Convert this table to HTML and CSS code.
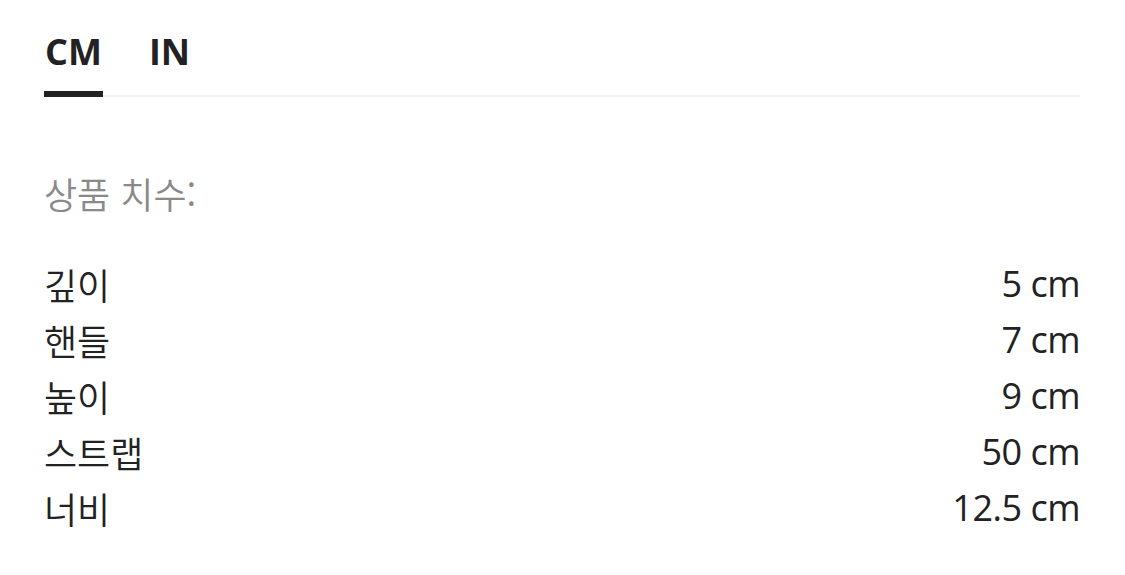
FILE: index.html
```html
<!DOCTYPE html>
<html lang="ko">
<head>
<meta charset="utf-8">
<link rel="stylesheet" href="styles.css">
</head>
<body>
<div class="sheet">
  <div class="tabs">
    <div class="tab active">CM</div>
    <div class="tab">IN</div>
  </div>
  <div class="label">상품 치수:</div>
  <ul class="dims">
    <li class="row"><span class="name">깊이</span><span class="val">5 cm</span></li>
    <li class="row"><span class="name">핸들</span><span class="val">7 cm</span></li>
    <li class="row"><span class="name">높이</span><span class="val">9 cm</span></li>
    <li class="row"><span class="name">스트랩</span><span class="val">50 cm</span></li>
    <li class="row"><span class="name">너비</span><span class="val">12.5 cm</span></li>
  </ul>
</div>
</body>
</html>
```

FILE: styles.css
```css
html, body {
  margin: 0;
  padding: 0;
  background: #ffffff;
}
body {
  font-family: "Open Sans", "Noto Sans CJK KR", sans-serif;
  color: #222222;
}
.sheet {
  padding: 26px 45px 0 44px;
}
.tabs {
  display: flex;
  gap: 45px;
  border-bottom: 2px solid #f1f1f1;
}
.tab {
  font-size: 36px;
  font-weight: 700;
  line-height: 52px;
  padding: 0 1px 13px 1px;
  border-bottom: 6px solid transparent;
  margin-bottom: -2px;
  color: #222222;
}
.tab.active {
  border-bottom-color: #222222;
}
.label {
  margin-top: 68px;
  font-family: "Noto Sans CJK KR", "Open Sans", sans-serif;
  font-size: 36px;
  font-weight: 350;
  line-height: 56px;
  color: #8a8a8a;
}
.dims {
  list-style: none;
  margin: 35px 0 0 0;
  padding: 0;
}
.row {
  display: flex;
  justify-content: space-between;
  font-size: 36px;
  line-height: 56px;
}
.name {
  font-family: "Noto Sans CJK KR", sans-serif;
  font-weight: 350;
}
.val {
  font-weight: 400;
  letter-spacing: -0.5px;
}
```
